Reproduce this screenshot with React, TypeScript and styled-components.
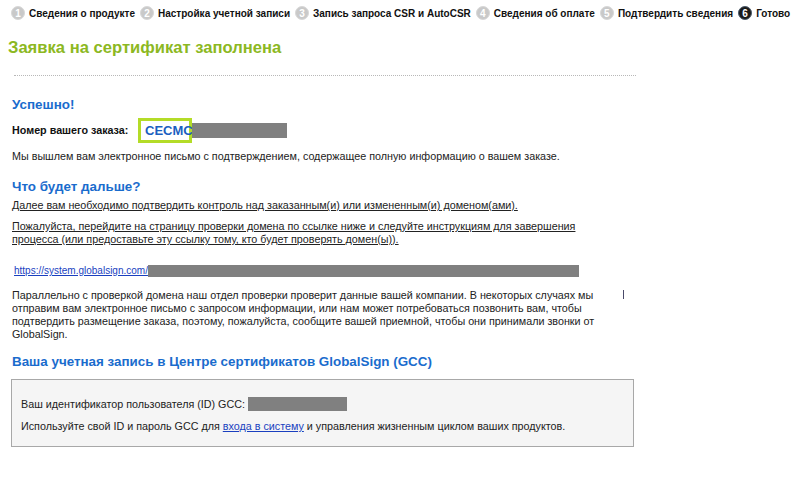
import React from "react";
import styled, { createGlobalStyle } from "styled-components";

const Global = createGlobalStyle`
  html, body { margin: 0; padding: 0; background: #fff; }
  body { font-family: Arial, "Liberation Sans", sans-serif; color: #222; }
`;

const Page = styled.div`
  width: 802px;
  height: 481px;
  overflow: hidden;
  position: relative;
`;

const Steps = styled.ol`
  list-style: none;
  margin: 0;
  padding: 6px 0 0 11px;
  display: flex;
  gap: 5px;
  height: 14px;
`;

const Step = styled.li`
  display: flex;
  align-items: center;
  gap: 4px;
  font-size: 10px;
  font-weight: bold;
  color: #111;
  white-space: nowrap;
`;

const Circle = styled.span<{ $active?: boolean }>`
  width: 14px;
  height: 14px;
  border-radius: 50%;
  background: ${(p) => (p.$active ? "#1b1b1b" : "#c9c9c9")};
  color: #fff;
  font-size: 10px;
  font-weight: bold;
  display: flex;
  align-items: center;
  justify-content: center;
  box-sizing: border-box;
  border: 1px solid ${(p) => (p.$active ? "#4a5a6a" : "#d8d8d8")};
`;

const Title = styled.h1`
  margin: 19px 0 0 8px;
  font-size: 16.6px;
  font-weight: bold;
  color: #8cb822;
  line-height: 18px;
`;

const Divider = styled.hr`
  margin: 18px 0 0 14px;
  width: 622px;
  border: none;
  border-top: 1px dotted #b8b8b8;
  height: 0;
`;

const Content = styled.div`
  padding-left: 12px;
`;

const Heading = styled.h2<{ $mt: number }>`
  margin: ${(p) => p.$mt}px 0 0 0;
  font-size: 13.4px;
  font-weight: bold;
  color: #1a6ccd;
  line-height: 16px;
`;

const OrderRow = styled.div`
  display: flex;
  align-items: center;
  margin-top: 4px;
  height: 26px;
`;

const OrderLabel = styled.span`
  font-size: 10.75px;
  font-weight: bold;
  color: #111;
  width: 126px;
`;

const OrderBox = styled.span`
  border: 3px solid #b4dc28;
  height: 25px;
  box-sizing: border-box;
  padding: 0 0 0 4px;
  display: flex;
  align-items: center;
  font-size: 13px;
  font-weight: bold;
  color: #1a5fc0;
  width: 54px;
`;

const Redact = styled.span<{ $w: number; $h: number }>`
  display: inline-block;
  width: ${(p) => p.$w}px;
  height: ${(p) => p.$h}px;
  background: #808080;
  vertical-align: middle;
`;

const Text = styled.p<{ $mt: number }>`
  margin: ${(p) => p.$mt}px 0 0 0;
  font-size: 10.75px;
  line-height: 13px;
  color: #222;
`;

const Underlined = styled(Text)`
  text-decoration: underline;
  width: 580px;
`;

const LinkRow = styled.div`
  margin-top: 18px;
  display: flex;
  align-items: center;
  font-size: 10px;
  line-height: 13px;
  padding-left: 2px;
`;

const Link = styled.a`
  color: #1a3fbf;
  text-decoration: underline;
`;

const Para = styled(Text)`
  width: 605px;
  position: relative;
`;

const Caret = styled.span`
  position: absolute;
  left: 611px;
  top: 1px;
  width: 1px;
  height: 9px;
  background: #4a4a6a;
`;

const AccountBox = styled.div`
  margin: 9px 0 0 -1px;
  width: 623px;
  height: 68px;
  box-sizing: border-box;
  background: #f5f5f5;
  border: 1px solid #a8a8a8;
  padding: 17px 0 0 9px;
`;

const IdRow = styled.div`
  display: flex;
  align-items: center;
  font-size: 10.75px;
  gap: 3px;
`;

export default function App() {
  const steps = [
    "Сведения о продукте",
    "Настройка учетной записи",
    "Запись запроса CSR и AutoCSR",
    "Сведения об оплате",
    "Подтвердить сведения",
    "Готово",
  ];
  return (
    <Page>
      <Global />
      <Steps>
        {steps.map((s, i) => (
          <Step key={s}>
            <Circle $active={i === 5}>{i + 1}</Circle>
            {s}
          </Step>
        ))}
      </Steps>
      <Title>Заявка на сертификат заполнена</Title>
      <Divider />
      <Content>
        <Heading $mt={21}>Успешно!</Heading>
        <OrderRow>
          <OrderLabel>Номер вашего заказа:</OrderLabel>
          <OrderBox>CECMC</OrderBox>
          <Redact $w={95} $h={15} />
        </OrderRow>
        <Text $mt={7}>
          Мы вышлем вам электронное письмо с подтверждением, содержащее полную информацию о вашем заказе.
        </Text>
        <Heading $mt={16}>Что будет дальше?</Heading>
        <Underlined $mt={4}>
          Далее вам необходимо подтвердить контроль над заказанным(и) или измененным(и) доменом(ами).
        </Underlined>
        <Underlined $mt={8}>
          Пожалуйста, перейдите на страницу проверки домена по ссылке ниже и следуйте инструкциям для завершения
          процесса (или предоставьте эту ссылку тому, кто будет проверять домен(ы)).
        </Underlined>
        <LinkRow>
          <Link href="#">https://system.globalsign.com/</Link>
          <Redact $w={431} $h={12} />
        </LinkRow>
        <Para $mt={12}>
          Параллельно с проверкой домена наш отдел проверки проверит данные вашей компании. В некоторых случаях мы
          отправим вам электронное письмо с запросом информации, или нам может потребоваться позвонить вам, чтобы
          подтвердить размещение заказа, поэтому, пожалуйста, сообщите вашей приемной, чтобы они принимали звонки от
          GlobalSign.
          <Caret />
        </Para>
        <Heading $mt={13}>Ваша учетная запись в Центре сертификатов GlobalSign (GCC)</Heading>
        <AccountBox>
          <IdRow>
            Ваш идентификатор пользователя (ID) GCC:
            <Redact $w={99} $h={14} />
          </IdRow>
          <Text $mt={9}>
            Используйте свой ID и пароль GCC для <Link href="#">входа в систему</Link> и управления жизненным циклом
            ваших продуктов.
          </Text>
        </AccountBox>
      </Content>
    </Page>
  );
}
